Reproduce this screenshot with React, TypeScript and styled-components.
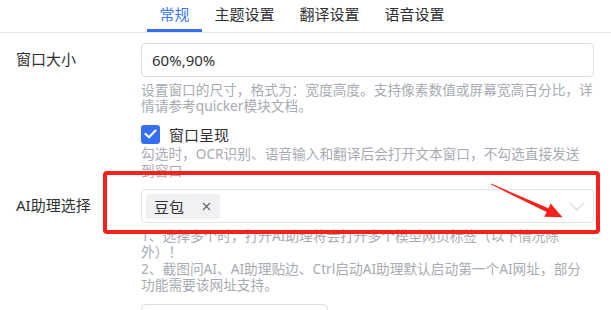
import styled, { createGlobalStyle } from "styled-components";

const GlobalStyle = createGlobalStyle`
  html, body {
    margin: 0;
    padding: 0;
    background: #ffffff;
  }
  body {
    font-family: "Noto Sans", "Noto Sans CJK SC", sans-serif;
    color: #303133;
    overflow: hidden;
  }
  * {
    box-sizing: border-box;
  }
`;

const tabs = ["常规", "主题设置", "翻译设置", "语音设置"];

export default function App() {
  return (
    <Page>
      <GlobalStyle />
      <TabBar>
        {tabs.map((t, i) => (
          <Tab key={t} $active={i === 0}>
            {t}
          </Tab>
        ))}
      </TabBar>
      <Form>
        <Item>
          <Label>窗口大小</Label>
          <Control>
            <TextInput defaultValue="60%,90%" />
            <Help>
              设置窗口的尺寸，格式为：宽度高度。支持像素数值或屏幕宽高百分比，详情请参考quicker模块文档。
            </Help>
          </Control>
        </Item>
        <Item>
          <Label />
          <Control>
            <CheckRow>
              <CheckBox>
                <svg width="13" height="10" viewBox="0 0 13 10">
                  <path
                    d="M1.5 5 L5 8.3 L11.5 1.6"
                    fill="none"
                    stroke="#fff"
                    strokeWidth="2.2"
                    strokeLinecap="round"
                    strokeLinejoin="round"
                  />
                </svg>
              </CheckBox>
              <span>窗口呈现</span>
            </CheckRow>
            <Help $gap={2.5} $maxWidth={446}>
              勾选时，OCR识别、语音输入和翻译后会打开文本窗口，不勾选直接发送到窗口
            </Help>
          </Control>
        </Item>
        <Item>
          <Label>AI助理选择</Label>
          <Control>
            <Select>
              <Tag>
                豆包
                <svg width="9" height="9" viewBox="0 0 9 9">
                  <path d="M1 1 L8 8 M8 1 L1 8" stroke="#606266" strokeWidth="1.1" />
                </svg>
              </Tag>
              <Chevron width="16" height="9" viewBox="0 0 16 9">
                <path d="M0.8 0.8 L8 8 L15.2 0.8" fill="none" stroke="#d0d3d9" strokeWidth="1.1" />
              </Chevron>
            </Select>
            <Help>
              <div>1、选择多个时，打开AI助理将会打开多个模型网页标签（以下情况除外）！</div>
              <div>2、截图问AI、AI助理贴边、Ctrl启动AI助理默认启动第一个AI网址，部分功能需要该网址支持。</div>
            </Help>
          </Control>
        </Item>
        <Item>
          <Label />
          <Control>
            <ShortInput />
          </Control>
        </Item>
      </Form>

      {/* 标注：红框 + 箭头 */}
      <RedBox />
      <Arrow width="80" height="42" viewBox="488 180 80 42">
        <polygon
          points="491,183.6 548.4,208.2 550.6,203.6 562.5,217.2 544.3,216.8 546.6,212 491,184.6"
          fill="#f5211b"
        />
      </Arrow>
    </Page>
  );
}

const Page = styled.div`
  position: relative;
  width: 611px;
  height: 310px;
  overflow: hidden;
`;

const TabBar = styled.div`
  display: flex;
  justify-content: center;
  padding-right: 7px;
  height: 33px;
  border-bottom: 1px solid #e4e7ed;
`;

const Tab = styled.div<{ $active?: boolean }>`
  height: 32px;
  padding: 0 12.5px;
  font-size: 15px;
  line-height: 29px;
  color: ${(p) => (p.$active ? "#3a78f6" : "#303133")};
  border-bottom: 3px solid ${(p) => (p.$active ? "#3670f2" : "transparent")};
`;

const Form = styled.div`
  display: flex;
  flex-direction: column;
  gap: 10px;
  padding: 10px 17px 0 16px;
`;

const Item = styled.div`
  display: grid;
  grid-template-columns: 125px 1fr;
`;

const Label = styled.div`
  font-size: 15px;
  line-height: 32px;
  color: #303133;
  white-space: nowrap;
`;

const Control = styled.div`
  display: flex;
  flex-direction: column;
  min-width: 0;
`;

const TextInput = styled.input`
  height: 34px;
  width: 100%;
  border: 1px solid #dcdfe6;
  border-radius: 4px;
  padding: 0 10px;
  font-family: inherit;
  font-size: 15px;
  color: #303133;
  outline: none;
`;

const ShortInput = styled(TextInput)`
  width: 187px;
`;

const Help = styled.div<{ $gap?: number; $maxWidth?: number }>`
  margin-top: ${(p) => p.$gap ?? 4.5}px;
  max-width: ${(p) => (p.$maxWidth ? `${p.$maxWidth}px` : "none")};
  font-size: 13.7px;
  line-height: 16.5px;
  color: #a8abb2;
`;

const CheckRow = styled.label`
  display: flex;
  align-items: center;
  gap: 9px;
  height: 19px;
  font-size: 15px;
  color: #303133;
`;

const CheckBox = styled.span`
  display: flex;
  align-items: center;
  justify-content: center;
  width: 19px;
  height: 19px;
  border-radius: 3px;
  background: #3670f2;
`;

const Select = styled.div`
  display: flex;
  align-items: center;
  height: 34px;
  border: 1px solid #e2e4e9;
  border-radius: 4px;
  padding: 0 8px 0 4px;
`;

const Tag = styled.span`
  display: flex;
  align-items: center;
  height: 25px;
  padding: 0 9px 0 8px;
  gap: 18px;
  border-radius: 4px;
  background: #f0f1f3;
  font-size: 15px;
  color: #303133;
`;

const Chevron = styled.svg`
  margin-left: auto;
`;

const RedBox = styled.div`
  position: absolute;
  left: 103px;
  top: 171px;
  width: 497px;
  height: 63px;
  border: 4.5px solid #f5211b;
  border-radius: 4px;
  pointer-events: none;
`;

const Arrow = styled.svg`
  position: absolute;
  left: 488px;
  top: 180px;
  pointer-events: none;
`;
